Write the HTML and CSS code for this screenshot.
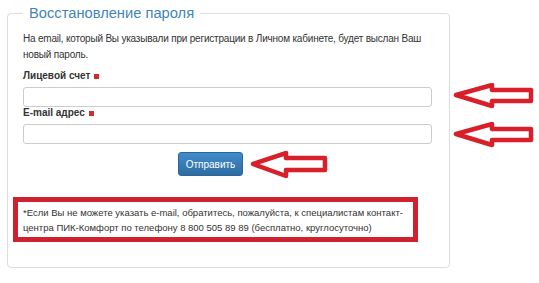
FILE: index.html
```html
<!DOCTYPE html>
<html lang="ru">
<head>
    <meta charset="UTF-8">
    <title>Восстановление пароля</title>
    <link rel="stylesheet" href="styles.css">
</head>
<body>

<fieldset class="recovery">
    <legend>Восстановление пароля</legend>
    <p class="intro">На email, который Вы указывали при регистрации в Личном кабинете, будет выслан Ваш новый пароль.</p>

    <label class="field-label">Лицевой счет <span class="req"></span></label>
    <input class="field" type="text">

    <label class="field-label">E-mail адрес <span class="req"></span></label>
    <input class="field" type="text">

    <button class="btn-send">Отправить</button>

    <div class="note">*Если Вы не можете указать e-mail, обратитесь, пожалуйста, к специалистам контакт-центра ПИК-Комфорт по телефону 8 800 505 89 89 (бесплатно, круглосуточно)</div>
</fieldset>

<!-- стрелки-пометки поверх формы -->
<svg class="arrow arrow-1" width="82" height="26" viewBox="0 0 82 26">
    <polygon points="3,12 39,2 39,7 78,7 78,18 39,18 39,23" />
</svg>
<svg class="arrow arrow-2" width="82" height="26" viewBox="0 0 82 26">
    <polygon points="3,12 39,2 39,7 78,7 78,18 39,18 39,23" />
</svg>
<svg class="arrow arrow-3" width="80" height="28" viewBox="0 0 80 28">
    <polygon points="3,13 36,2 36,7 75,7 75,19 36,19 36,25" />
</svg>

</body>
</html>
```

FILE: styles.css
```css
body { margin: 0; font-family: "Liberation Sans", Arial, sans-serif; color: #333; background: #fff; }

.recovery {
    width: 443px;
    height: 265px;
    margin: 3px 0 0 7px;
    padding: 0 16px 24px 15px;
    border: 1px solid #ddd;
    border-radius: 4px;
    box-sizing: border-box;
}

.recovery legend {
    padding: 0 6px;
    font-size: 14.7px;
    line-height: 20px;
    color: #3f86b4;
}

.intro { margin: 8px 0 7px; font-size: 10px; line-height: 16px; letter-spacing: -0.2px; }

.field-label { display: block; font-size: 10px; font-weight: bold; line-height: 12px; margin-bottom: 5px; }
.req { display: inline-block; width: 5px; height: 5px; background: #d32a2a; margin-left: 1px; }

.field {
    display: block;
    width: 409px;
    height: 20px;
    box-sizing: border-box;
    border: 1px solid #ccc;
    border-radius: 3px;
    margin: 0;
    padding: 2px 6px;
}

.btn-send {
    display: block;
    margin: 8px 0 0 155px;
    width: 65px;
    height: 24px;
    padding: 0;
    font-family: "Liberation Sans", Arial, sans-serif;
    font-size: 10px;
    color: #fff;
    background: linear-gradient(#428bca, #2d6ca2);
    border: 1px solid #2b669a;
    border-radius: 3px;
}

.note {
    margin: 21px 0 0 -10px;
    width: 405px;
    box-sizing: border-box;
    border: 5px solid #d0212e;
    padding: 3px 5px 2px;
    font-size: 9.5px;
    line-height: 15px;
}

.arrow { position: absolute; }
.arrow polygon { fill: #fff; stroke: #d81f2a; stroke-width: 4.5; stroke-linejoin: round; }
.arrow-1 { left: 453px; top: 83px; }
.arrow-2 { left: 453px; top: 122px; }
.arrow-3 { left: 250px; top: 151px; }
```
